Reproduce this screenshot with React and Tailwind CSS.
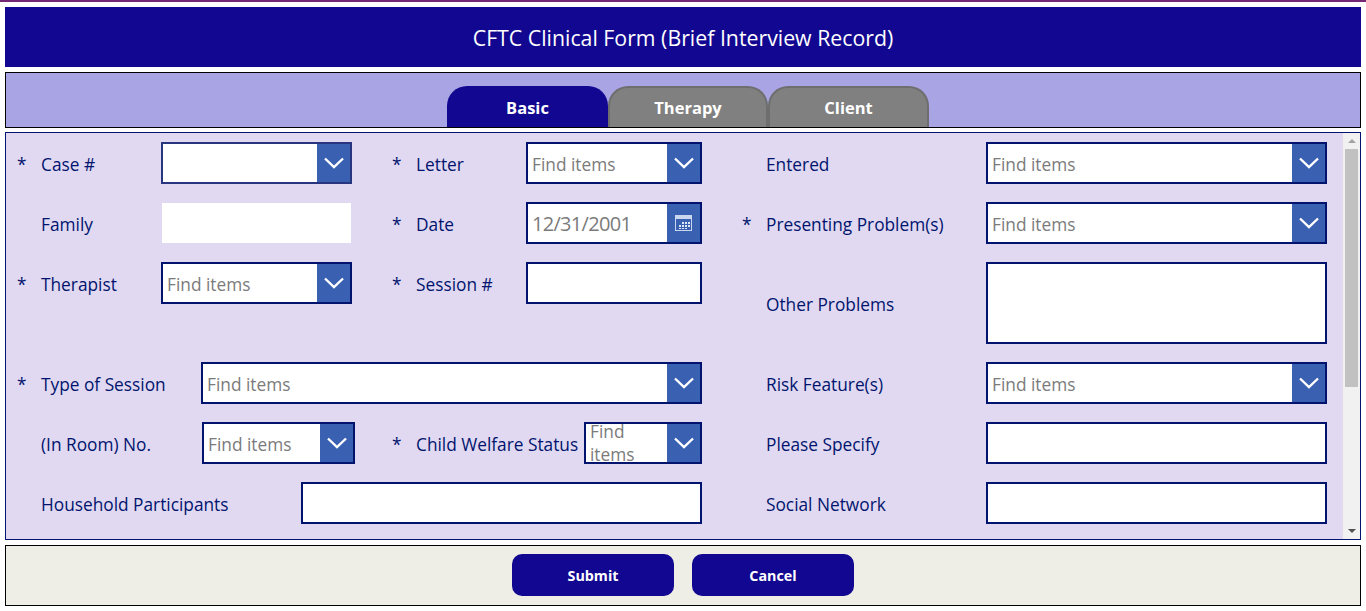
import React from "react";

function Chevron() {
  return (
    <svg width="20" height="12" viewBox="0 0 20 12" fill="none" stroke="white" strokeWidth="2.4">
      <path d="M1 1.5 L10 10 L19 1.5" />
    </svg>
  );
}

function CalendarIcon() {
  return (
    <svg width="18" height="17" viewBox="0 0 18 17" fill="none">
      <rect x="0.5" y="0.5" width="16" height="15" stroke="#c9d6ee" />
      <rect x="1" y="1" width="15" height="3" fill="#c9d6ee" />
      <path d="M7 7h2v2H7zM10 7h2v2h-2zM13 7h2v2h-2zM4 10h2v2H4zM7 10h2v2H7zM10 10h2v2h-2zM13 10h2v2h-2zM4 13h2v1H4zM7 13h2v1H7zM10 13h2v1h-2z" fill="#dfe7f6" />
    </svg>
  );
}

function Star({ on }) {
  return <span className="w-[24px] shrink-0 text-[#00146e]">{on ? "*" : ""}</span>;
}

function Label({ star, width, children }) {
  return (
    <div className="flex shrink-0 items-center pt-[4px]" style={{ width }}>
      <Star on={star} />
      <span className="whitespace-nowrap text-[#00146e]">{children}</span>
    </div>
  );
}

function Dropdown({ width, text = "Find items", wrap, border = "border-[#00146e]" }) {
  return (
    <div className={"flex h-[42px] shrink-0 border-2 bg-white " + border} style={{ width }}>
      {wrap ? (
        <div className="min-w-0 flex-1 overflow-hidden pl-[4px] text-[#7b7b7b]">
          <div className="-mt-[4px] leading-[23px]">{text}</div>
        </div>
      ) : (
        <div className="flex min-w-0 flex-1 items-center pl-[4px] pt-[4px] text-[#7b7b7b]">{text}</div>
      )}
      <div className="flex w-[33px] shrink-0 items-center justify-center bg-[#3a60b1]">
        <Chevron />
      </div>
    </div>
  );
}

function DateBox({ width }) {
  return (
    <div className="flex h-[42px] shrink-0 border-2 border-[#00146e] bg-white" style={{ width }}>
      <div className="flex flex-1 items-center pl-[4px] pt-[1px] text-[20px] tracking-[-0.7px] text-[#7b7b7b]">12/31/2001</div>
      <div className="flex w-[33px] items-center justify-center bg-[#3a60b1]">
        <CalendarIcon />
      </div>
    </div>
  );
}

function TextBox({ width, tall }) {
  return <div className={(tall ? "h-[82px] " : "h-[42px] ") + "shrink-0 border-2 border-[#00146e] bg-white"} style={{ width }} />;
}

function Row({ children, tall }) {
  return <div className={(tall ? "h-[82px] " : "h-[42px] ") + "flex items-center"}>{children}</div>;
}

function Tab({ active, width, children }) {
  return (
    <div
      className={
        active
          ? "flex h-[41px] items-center justify-center rounded-t-[20px] bg-[#120790] pt-[4px] text-[16.5px] font-bold text-white"
          : "flex h-[41px] items-center justify-center rounded-t-[20px] border-2 border-b-0 border-[#6e6e6e] bg-[#808080] pt-[2px] text-[16.5px] font-bold text-white"
      }
      style={{ width }}
    >
      {children}
    </div>
  );
}

function Scrollbar() {
  return (
    <div className="flex w-[17px] shrink-0 flex-col items-center bg-[#f1f1f1]">
      <div className="flex h-[16px] items-center justify-center">
        <div className="h-0 w-0 border-x-[4px] border-b-[4px] border-x-transparent border-b-[#a3a3a3]" />
      </div>
      <div className="h-[238px] w-[13px] bg-[#c1c1c1]" />
      <div className="flex-1" />
      <div className="flex h-[16px] items-center justify-center">
        <div className="h-0 w-0 border-x-[4px] border-t-[4px] border-x-transparent border-t-[#505050]" />
      </div>
    </div>
  );
}

export default function App() {
  return (
    <div className="h-[611px] overflow-hidden bg-white font-['Open_Sans',sans-serif] text-[17.3px]">
      <div className="h-[2px] bg-[#742774]" />
      <div className="flex flex-col px-[5px] pt-[5px]">
        {/* Title */}
        <div className="flex h-[60px] items-center justify-center bg-[#120790] pt-[2px] text-[21.3px] text-white">
          CFTC Clinical Form (Brief Interview Record)
        </div>

        {/* Tabs */}
        <div className="mt-[5px] flex h-[56px] items-end border border-black bg-[#a9a4e4] pl-[441px]">
          <Tab active width="161px">Basic</Tab>
          <Tab width="160px">Therapy</Tab>
          <Tab width="161px">Client</Tab>
        </div>

        {/* Form */}
        <div className="mt-[4px] flex h-[408px] border border-[#00146e] bg-[#e1d9f1]">
          <div className="flex min-w-0 flex-1 gap-[40px] overflow-hidden pl-[11px] pt-[9px]">
            <div className="flex w-[685px] shrink-0 flex-col gap-[18px]">
              <Row>
                <Label star width="144px">Case #</Label>
                <Dropdown width="191px" text="" border="border-[#27367f]" />
                <div className="w-[40px]" />
                <Label star width="134px">Letter</Label>
                <Dropdown width="176px" />
              </Row>
              <Row>
                <Label width="145px">Family</Label>
                <div className="h-[40px] w-[189px] bg-white" />
                <div className="w-[41px]" />
                <Label star width="134px">Date</Label>
                <DateBox width="176px" />
              </Row>
              <Row>
                <Label star width="144px">Therapist</Label>
                <Dropdown width="191px" />
                <div className="w-[40px]" />
                <Label star width="134px">Session #</Label>
                <TextBox width="176px" />
              </Row>
              <div className="h-[22px]" />
              <Row>
                <Label star width="184px">Type of Session</Label>
                <Dropdown width="501px" />
              </Row>
              <Row>
                <Label width="185px">(In Room) No.</Label>
                <Dropdown width="153px" />
                <div className="w-[37px]" />
                <Label star width="192px">Child Welfare Status</Label>
                <Dropdown width="118px" text="Find items" wrap />
              </Row>
              <Row>
                <Label width="284px">Household Participants</Label>
                <TextBox width="401px" />
              </Row>
            </div>

            <div className="flex shrink-0 flex-col gap-[18px]">
              <Row>
                <Label width="244px">Entered</Label>
                <Dropdown width="341px" />
              </Row>
              <Row>
                <Label star width="244px">Presenting Problem(s)</Label>
                <Dropdown width="341px" />
              </Row>
              <Row tall>
                <Label width="244px">Other Problems</Label>
                <TextBox width="341px" tall />
              </Row>
              <Row>
                <Label width="244px">Risk Feature(s)</Label>
                <Dropdown width="341px" />
              </Row>
              <Row>
                <Label width="244px">Please Specify</Label>
                <TextBox width="341px" />
              </Row>
              <Row>
                <Label width="244px">Social Network</Label>
                <TextBox width="341px" />
              </Row>
            </div>
          </div>
          <Scrollbar />
        </div>

        {/* Footer */}
        <div className="mt-[5px] flex h-[61px] items-center justify-center gap-[18px] border border-black bg-[#eeeee6] pb-[2px]">
          <button className="h-[42px] w-[162px] rounded-[10px] bg-[#120790] pt-[2px] text-[14.3px] font-bold text-white">Submit</button>
          <button className="h-[42px] w-[162px] rounded-[10px] bg-[#120790] pt-[2px] text-[14.3px] font-bold text-white">Cancel</button>
        </div>
      </div>
    </div>
  );
}
